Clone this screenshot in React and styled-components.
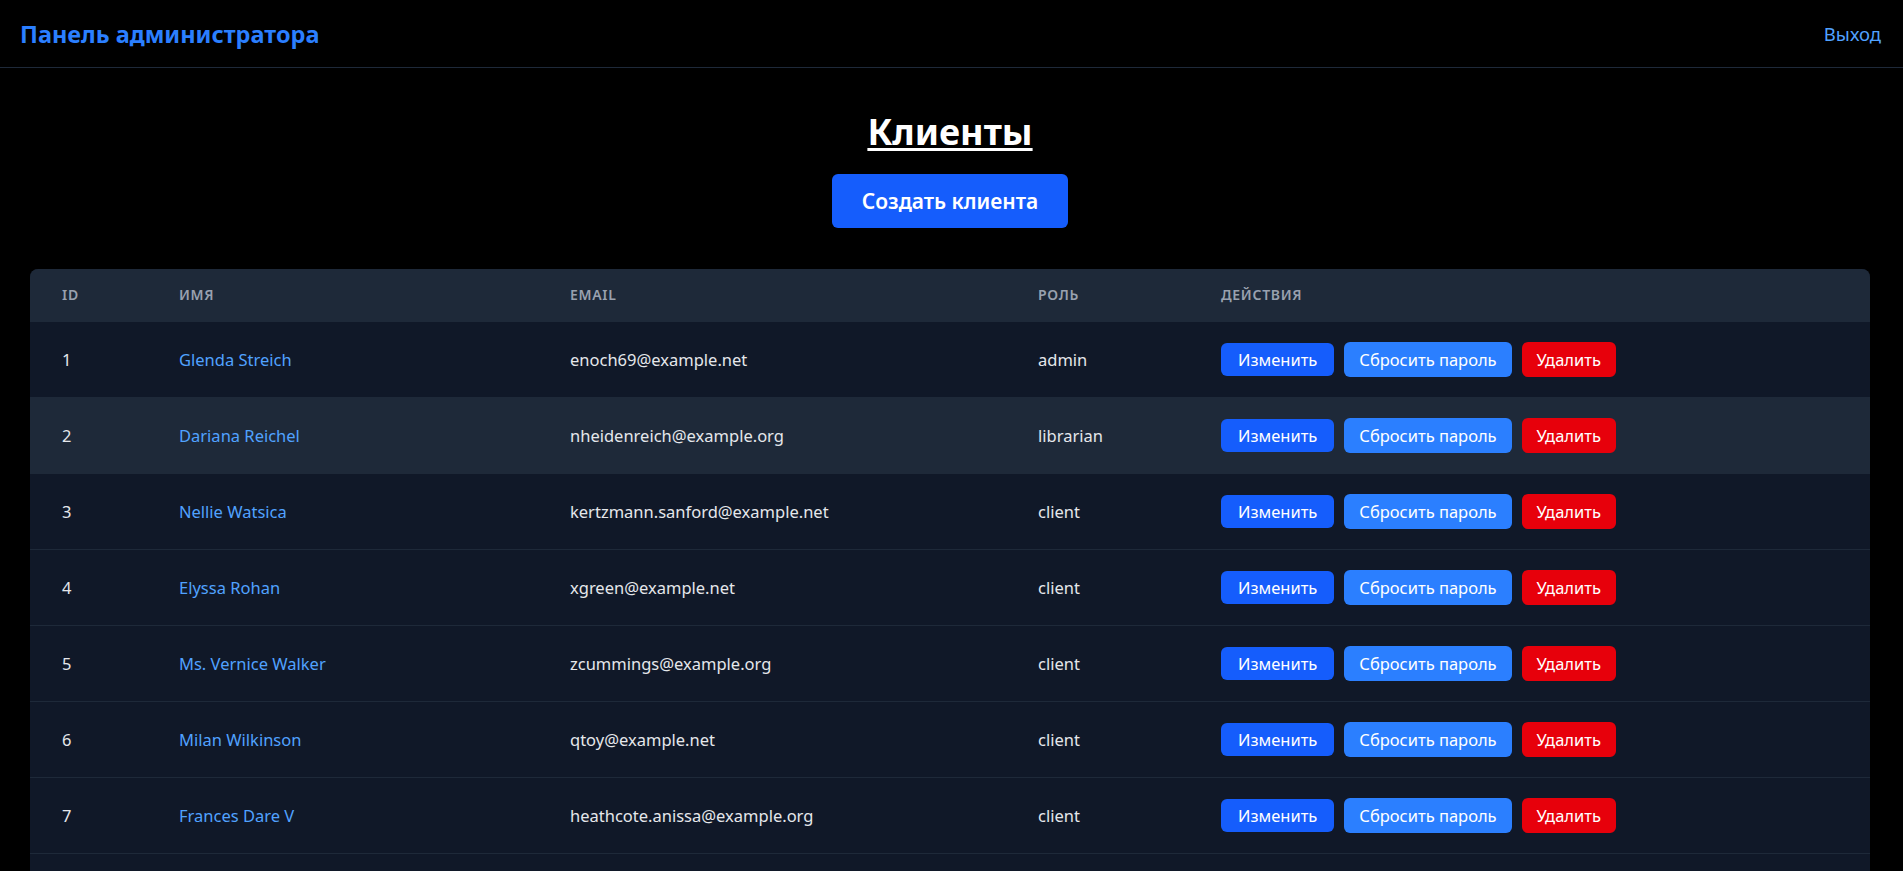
import React from 'react'
import styled, { createGlobalStyle } from "styled-components";

const clients = [
  { id: 1, name: "Glenda Streich", email: "enoch69@example.net", role: "admin" },
  { id: 2, name: "Dariana Reichel", email: "nheidenreich@example.org", role: "librarian" },
  { id: 3, name: "Nellie Watsica", email: "kertzmann.sanford@example.net", role: "client" },
  { id: 4, name: "Elyssa Rohan", email: "xgreen@example.net", role: "client" },
  { id: 5, name: "Ms. Vernice Walker", email: "zcummings@example.org", role: "client" },
  { id: 6, name: "Milan Wilkinson", email: "qtoy@example.net", role: "client" },
  { id: 7, name: "Frances Dare V", email: "heathcote.anissa@example.org", role: "client" },
  { id: 8, name: "Ransom Hills", email: "ogrady.kale@example.com", role: "client" },
];

const App = () => {
  return (
    <>
      <GlobalStyle />
      <TopBar>
        <Brand>Панель администратора</Brand>
        <LogoutLink href="#">Выход</LogoutLink>
      </TopBar>
      <Main>
        <Title>Клиенты</Title>
        <CreateButton>Создать клиента</CreateButton>
        <TableWrap>
          <Table>
            <thead>
              <HeadRow>
                <Th $width="117px">ID</Th>
                <Th $width="391px">Имя</Th>
                <Th $width="468px">Email</Th>
                <Th $width="183px">Роль</Th>
                <Th>Действия</Th>
              </HeadRow>
            </thead>
            <tbody>
              {clients.map((c) => (
                <Row key={c.id} $active={c.id === 2}>
                  <Td>{c.id}</Td>
                  <Td><NameLink href="#">{c.name}</NameLink></Td>
                  <Td>{c.email}</Td>
                  <Td>{c.role}</Td>
                  <Td>
                    <Actions>
                      <ActionButton $variant="edit">Изменить</ActionButton>
                      <ActionButton $variant="reset">Сбросить пароль</ActionButton>
                      <ActionButton $variant="delete">Удалить</ActionButton>
                    </Actions>
                  </Td>
                </Row>
              ))}
            </tbody>
          </Table>
        </TableWrap>
      </Main>
    </>
  )
};

const GlobalStyle = createGlobalStyle`
  html {
    scrollbar-width: none;
  }
  body {
    margin: 0;
    background: #000;
    color: #e5e7eb;
    font-family: "Noto Sans", "Open Sans", sans-serif;
  }
`;

const TopBar = styled.header`
  height: 67px;
  border-bottom: 1px solid #1e2939;
  display: flex;
  align-items: center;
  justify-content: space-between;
  padding: 0 22px 0 20px;
`;

const Brand = styled.span`
  font-size: 23.5px;
  font-weight: 700;
  color: #2b7fff;
`;

const LogoutLink = styled.a`
  font-size: 18.5px;
  color: #51a2ff;
  text-decoration: none;
`;

const Main = styled.main`
  display: flex;
  flex-direction: column;
  align-items: center;
  padding: 44px 33px 0 30px;
`;

const Title = styled.h1`
  margin: 0;
  font-size: 36px;
  line-height: 40px;
  font-weight: 700;
  color: #fff;
  text-decoration: underline;
  text-underline-offset: 3px;
`;

const CreateButton = styled.button`
  margin-top: 22px;
  height: 54px;
  padding: 0 30px;
  border: none;
  border-radius: 6px;
  background: #155dfc;
  color: #fff;
  font-family: inherit;
  font-size: 21px;
  font-weight: 600;
  cursor: pointer;
`;

const TableWrap = styled.div`
  margin-top: 41px;
  align-self: stretch;
  background: #101828;
  border-radius: 8px;
  overflow: hidden;
`;

const Table = styled.table`
  width: 100%;
  border-collapse: collapse;
  table-layout: fixed;
`;

const HeadRow = styled.tr`
  background: #1e2939;
  height: 52px;
`;

const Th = styled.th`
  box-sizing: border-box;
  width: ${(p) => p.$width || "auto"};
  padding: 0 0 0 32px;
  text-align: left;
  font-size: 14px;
  font-weight: 600;
  letter-spacing: 0.05em;
  text-transform: uppercase;
  color: #99a1af;
`;

const Row = styled.tr`
  height: 76px;
  background: ${(p) => (p.$active ? "#1e2939" : "#101828")};
  border-top: 1px solid #1e2939;
`;

const Td = styled.td`
  padding: 0 0 0 32px;
  font-size: 16.5px;
  color: #e5e7eb;
  white-space: nowrap;
`;

const NameLink = styled.a`
  color: #51a2ff;
  text-decoration: none;
`;

const Actions = styled.div`
  display: flex;
  align-items: center;
  gap: 10px;
`;

const variants = {
  edit: { bg: "#155dfc", h: "33px", px: "17px" },
  reset: { bg: "#2b7fff", h: "35px", px: "15px" },
  delete: { bg: "#e7000b", h: "35px", px: "15px" },
};

const ActionButton = styled.button`
  height: ${(p) => variants[p.$variant].h};
  padding: 0 ${(p) => variants[p.$variant].px};
  border: none;
  border-radius: 6px;
  background: ${(p) => variants[p.$variant].bg};
  color: #fff;
  font-family: inherit;
  font-size: 16.5px;
  cursor: pointer;
`;

export default App
